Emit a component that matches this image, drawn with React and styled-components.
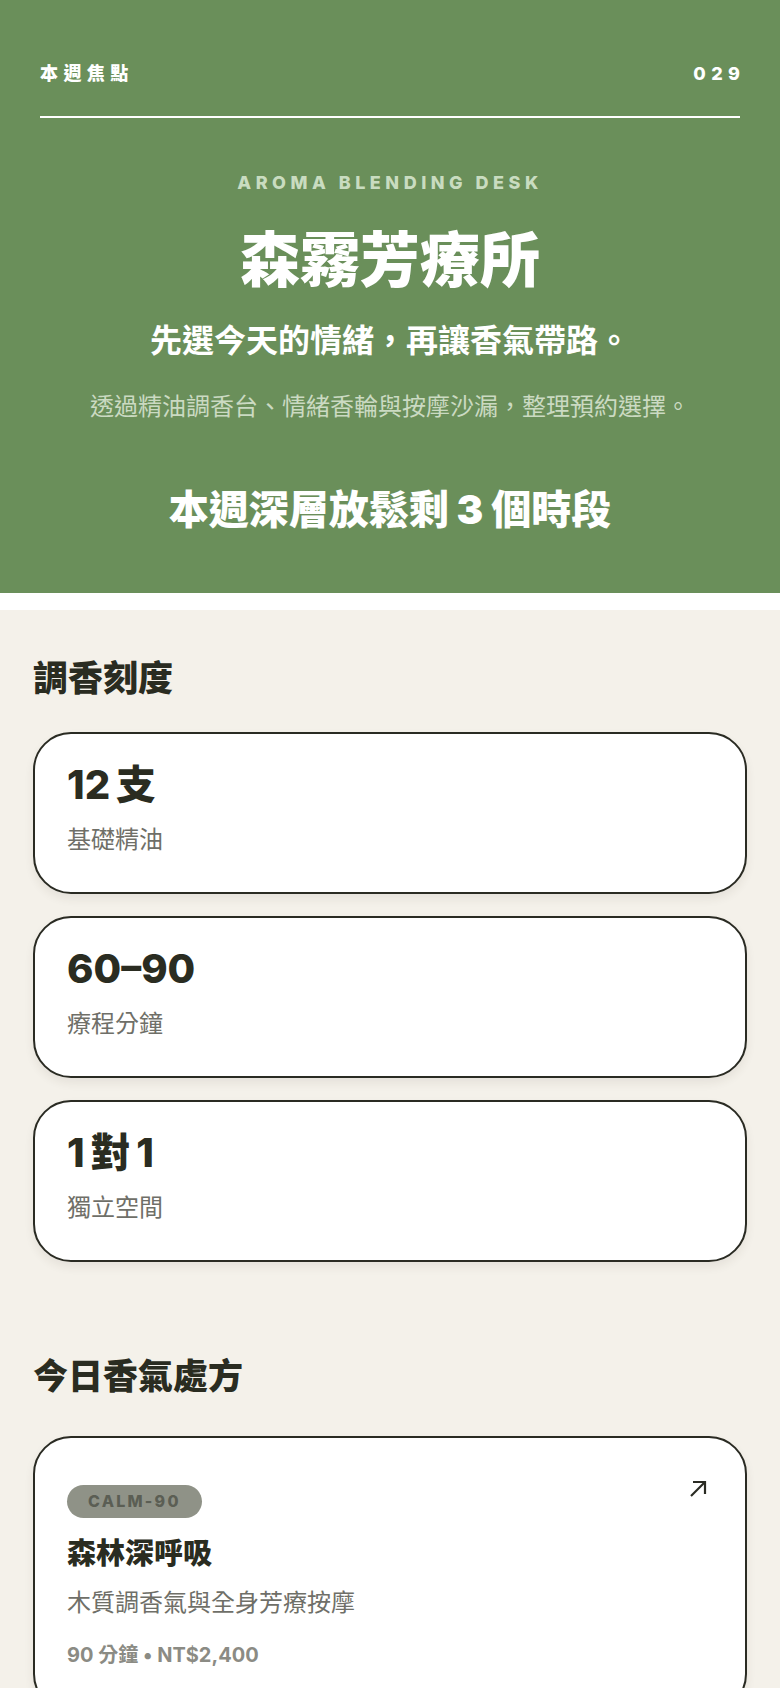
import styled, { createGlobalStyle } from "styled-components";

const GlobalStyle = createGlobalStyle`
  html, body {
    margin: 0;
    padding: 0;
    background: #ffffff;
  }
  body {
    font-family: "Inter", "Noto Sans CJK TC", sans-serif;
    color: #2a2c21;
  }
  * {
    box-sizing: border-box;
  }
`;

const Hero = styled.header`
  background: #6a8f5a;
  color: #ffffff;
  padding: 60px 40px 57px;
  display: flex;
  flex-direction: column;
  align-items: center;
  text-align: center;
`;

const TopBar = styled.div`
  width: 100%;
  display: flex;
  justify-content: space-between;
  align-items: center;
  padding-bottom: 29px;
  border-bottom: 2px solid #ffffff;
  font-size: 18px;
  line-height: 27px;
  font-weight: 800;
  letter-spacing: 0.3em;
`;

const Issue = styled.span`
  margin-right: -0.3em;
`;

const Eyebrow = styled.p`
  margin: 51px 0 0;
  font-size: 18px;
  line-height: 27px;
  font-weight: 800;
  letter-spacing: 0.25em;
  color: #c9dcc0;
`;

const Title = styled.h1`
  margin: 28px 0 0;
  font-size: 60px;
  line-height: 72px;
  font-weight: 900;
`;

const Tagline = styled.p`
  margin: 23px 0 0;
  font-size: 32px;
  line-height: 44px;
  font-weight: 700;
`;

const Intro = styled.p`
  margin: 25px 0 0;
  font-size: 24px;
  line-height: 38px;
  font-weight: 400;
  color: #cbdac2;
`;

const Slots = styled.p`
  margin: 58px 0 0;
  font-size: 40px;
  line-height: 52px;
  font-weight: 900;
`;

const Main = styled.main`
  margin-top: 17px;
  background: #f4f1ea;
  padding: 45px 33px 0;
`;

const Section = styled.section`
  display: flex;
  flex-direction: column;
  gap: 22px;
  & + & {
    margin-top: 91px;
  }
`;

const SectionTitle = styled.h2`
  margin: 0 0 ${(p) => (p.$wide ? "15px" : "9px")};
  font-size: 35px;
  line-height: 46px;
  font-weight: 900;
  color: #2a2c21;
`;

const Card = styled.div`
  background: #ffffff;
  border: 2px solid #2a2b23;
  border-radius: 38px;
  box-shadow: 0 5px 10px rgba(60, 55, 40, 0.08);
  padding: ${(p) => (p.$tall ? "47px 38px 40px 32px" : "27px 32px 34px")};
`;

const StatValue = styled.div`
  font-size: 40px;
  line-height: 48px;
  font-weight: 800;
  word-spacing: -3px;
  color: #2a2c21;
`;

const StatLabel = styled.div`
  margin-top: 13px;
  font-size: 24px;
  line-height: 36px;
  color: #6f6f68;
`;

const CardHead = styled.div`
  display: flex;
  justify-content: space-between;
  align-items: flex-start;
`;

const Badge = styled.span`
  display: inline-block;
  background: #8f9287;
  color: #5b5e54;
  border-radius: 999px;
  padding: 8px 21px;
  font-size: 16px;
  line-height: 17px;
  font-weight: 800;
  letter-spacing: 0.14em;
`;

const Arrow = styled.svg`
  width: 18px;
  height: 18px;
  margin-top: -5px;
  color: #2a2b23;
`;

const RecipeName = styled.h3`
  margin: 17px 0 0;
  font-size: 29px;
  line-height: 38px;
  font-weight: 900;
  color: #2a2c21;
`;

const RecipeDesc = styled.p`
  margin: 12px 0 0;
  font-size: 24px;
  line-height: 36px;
  color: #6f6f68;
`;

const RecipeMeta = styled.p`
  margin: 19px 0 0;
  font-size: 20px;
  line-height: 30px;
  font-weight: 700;
  color: #8b8b84;
`;

const stats = [
  { value: "12 支", label: "基礎精油" },
  { value: "60–90", label: "療程分鐘" },
  { value: "1 對 1", label: "獨立空間" },
];

export default function App() {
  return (
    <>
      <GlobalStyle />
      <Hero>
        <TopBar>
          <span>本週焦點</span>
          <Issue>029</Issue>
        </TopBar>
        <Eyebrow>AROMA BLENDING DESK</Eyebrow>
        <Title>森霧芳療所</Title>
        <Tagline>先選今天的情緒，再讓香氣帶路。</Tagline>
        <Intro>透過精油調香台、情緒香輪與按摩沙漏，整理預約選擇。</Intro>
        <Slots>本週深層放鬆剩 3 個時段</Slots>
      </Hero>
      <Main>
        <Section>
          <SectionTitle>調香刻度</SectionTitle>
          {stats.map((s) => (
            <Card key={s.label}>
              <StatValue>{s.value}</StatValue>
              <StatLabel>{s.label}</StatLabel>
            </Card>
          ))}
        </Section>
        <Section>
          <SectionTitle $wide>今日香氣處方</SectionTitle>
          <Card $tall>
            <CardHead>
              <Badge>CALM-90</Badge>
              <Arrow viewBox="0 0 18 18" fill="none" stroke="currentColor" strokeWidth="2.2">
                <path d="M2 16 L16 2" />
                <path d="M4 2 H16 V14" />
              </Arrow>
            </CardHead>
            <RecipeName>森林深呼吸</RecipeName>
            <RecipeDesc>木質調香氣與全身芳療按摩</RecipeDesc>
            <RecipeMeta>90 分鐘 • NT$2,400</RecipeMeta>
          </Card>
        </Section>
      </Main>
    </>
  );
}
